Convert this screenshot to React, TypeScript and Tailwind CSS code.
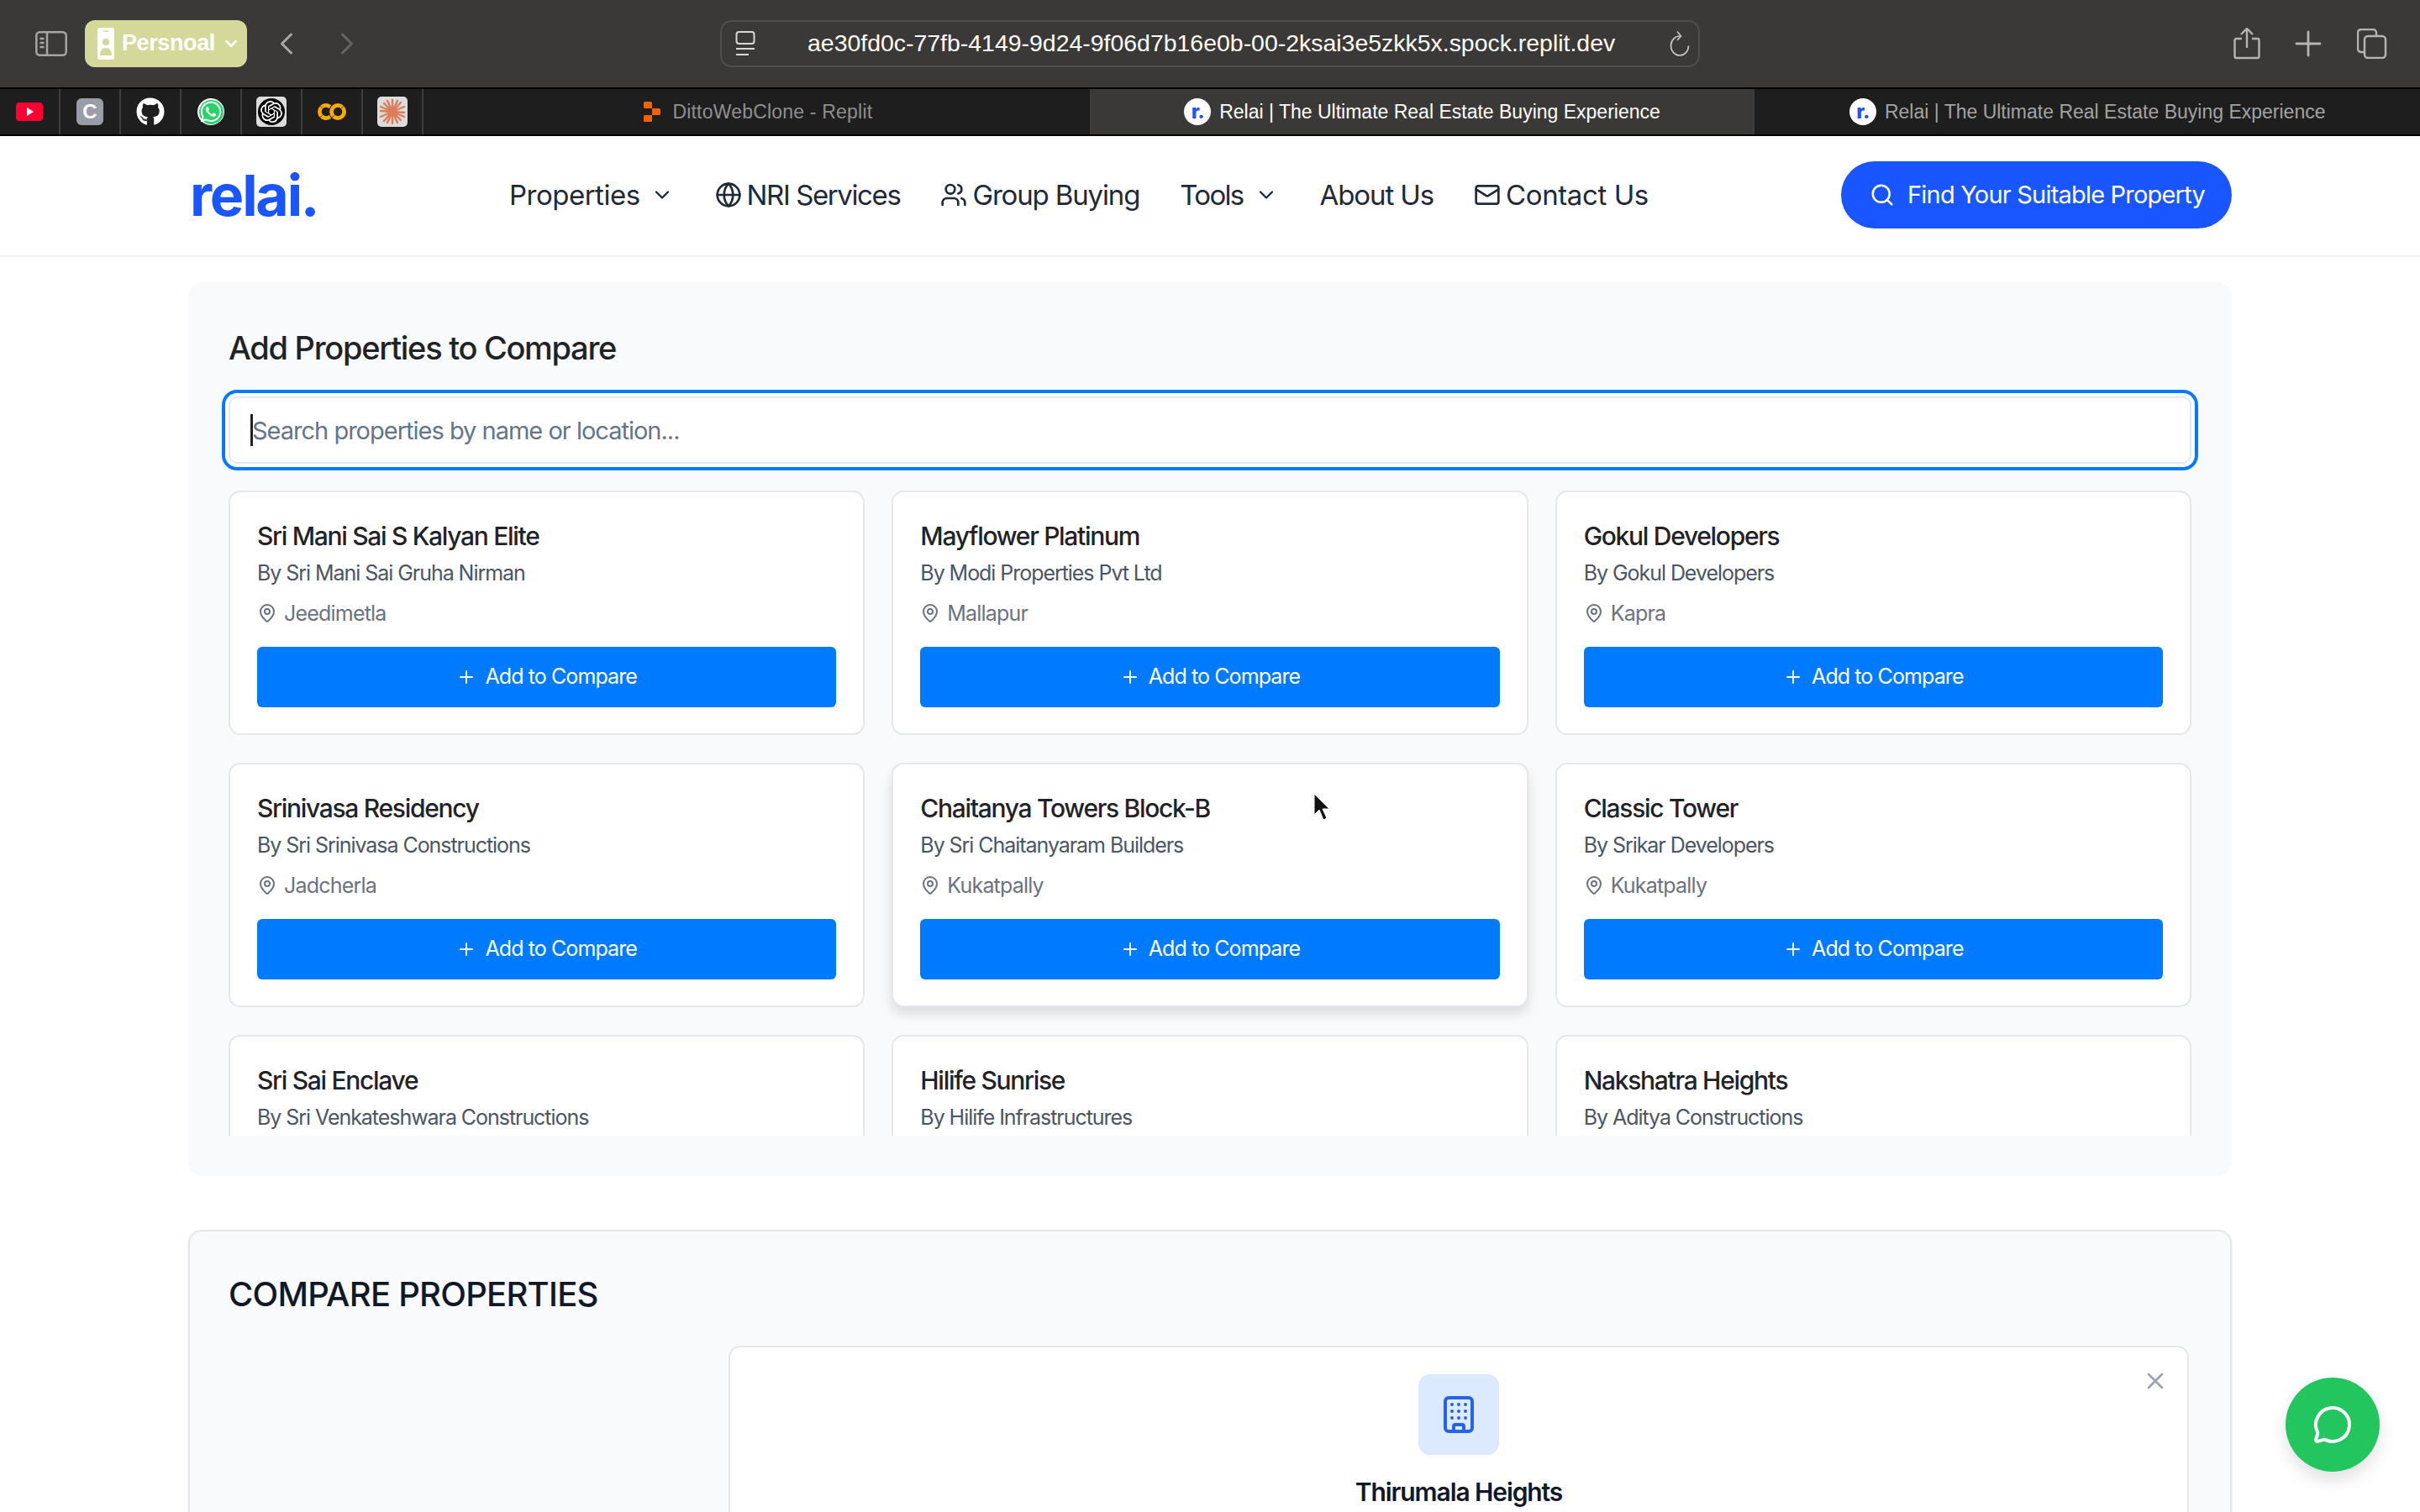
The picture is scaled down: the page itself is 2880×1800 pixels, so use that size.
import {
  Building,
  ChevronDown,
  ChevronLeft,
  ChevronRight,
  Globe,
  Mail,
  MapPin,
  MessageCircle,
  Plus,
  Search,
  Users,
  X,
} from "lucide-react";
import { FaGithub, FaWhatsapp } from "react-icons/fa";
import { SiGooglecolab, SiOpenai, SiReplit } from "react-icons/si";

// last row sits under the scroll fold, only name + builder are visible
const PROPERTIES = [
  { name: "Sri Mani Sai S Kalyan Elite", by: "By Sri Mani Sai Gruha Nirman", place: "Jeedimetla" },
  { name: "Mayflower Platinum", by: "By Modi Properties Pvt Ltd", place: "Mallapur" },
  { name: "Gokul Developers", by: "By Gokul Developers", place: "Kapra" },
  { name: "Srinivasa Residency", by: "By Sri Srinivasa Constructions", place: "Jadcherla" },
  { name: "Chaitanya Towers Block-B", by: "By Sri Chaitanyaram Builders", place: "Kukatpally", hover: true },
  { name: "Classic Tower", by: "By Srikar Developers", place: "Kukatpally" },
  { name: "Sri Sai Enclave", by: "By Sri Venkateshwara Constructions" },
  { name: "Hilife Sunrise", by: "By Hilife Infrastructures" },
  { name: "Nakshatra Heights", by: "By Aditya Constructions" },
];

function RelaiFavicon() {
  return (
    <span className="flex h-[32px] w-[32px] items-center justify-center rounded-full bg-white font-['Inter',sans-serif] text-[24px] leading-none font-extrabold tracking-[-1px] text-[#1a56ff]">
      r.
    </span>
  );
}

function Pinned({ children }: { children: React.ReactNode }) {
  return (
    <div className="flex h-full w-[72px] shrink-0 items-center justify-center border-r-2 border-[#3d3d3d]">
      {children}
    </div>
  );
}

function BrowserChrome() {
  return (
    <div className="shrink-0 font-['Liberation_Sans',sans-serif]">
      {/* Toolbar */}
      <div className="flex h-[104px] items-center bg-[#3a3937] pb-[1px]">
        <svg className="ml-[42px] h-[30px] w-[38px]" viewBox="0 0 38 30" fill="none" stroke="#a5a5a3" strokeWidth="2.5">
          <rect x="1.3" y="1.3" width="35.4" height="27.4" rx="4" />
          <path d="M14 1v28M5.5 9h5M5.5 14h5M5.5 19h5" />
        </svg>
        <div className="ml-[21px] flex h-[56px] w-[193px] items-center rounded-[12px] bg-[#d4d899] pl-[15px] text-white">
          <svg className="h-[38px] w-[20px]" viewBox="0 0 20 38" fill="#fff">
            <path d="M3 0h14a3 3 0 0 1 3 3v32a3 3 0 0 1-3 3H3a3 3 0 0 1-3-3V3a3 3 0 0 1 3-3Z" />
            <circle cx="10" cy="17" r="4" fill="#d4d899" />
            <path d="M3 33c0-6 3-9 7-9s7 3 7 9Z" fill="#d4d899" />
            <path d="M7 4h6" stroke="#d4d899" strokeWidth="1.5" />
          </svg>
          <span className="ml-[9px] text-[27px] leading-none font-bold tracking-[-0.4px]">Persnoal</span>
          <ChevronDown className="ml-[8px] h-[22px] w-[22px]" strokeWidth={3} />
        </div>
        <ChevronLeft className="ml-[25px] h-[44px] w-[44px] text-[#a8a8a6]" strokeWidth={1.6} />
        <ChevronRight className="ml-[28px] h-[44px] w-[44px] text-[#666563]" strokeWidth={1.6} />
        <div className="ml-[422px] flex h-[56px] w-[1166px] items-center rounded-[14px] border-2 border-[#4f4e4c] pr-[10px] pl-[16px] text-white">
          <svg className="h-[30px] w-[24px]" viewBox="0 0 24 30" fill="none" stroke="#d8d8d6" strokeWidth="2">
            <rect x="1.5" y="1" width="21" height="14" rx="3" />
            <path d="M1 21h22M1 28h15" />
          </svg>
          <span className="ml-[62px] text-[28.45px] leading-none font-normal whitespace-nowrap">
            ae30fd0c-77fb-4149-9d24-9f06d7b16e0b-00-2ksai3e5zkk5x.spock.replit.dev
          </span>
          <svg className="ml-auto h-[32px] w-[24px]" viewBox="0 0 24 32" fill="none" stroke="#c4c4c2" strokeWidth="1.7">
            <path d="M12 7a10.5 11.5 0 1 0 10.5 11.5" />
            <path d="M9 1.5l4.5 5.5L9 12" />
          </svg>
        </div>
        <div className="ml-auto flex items-center pr-[39px]">
          <svg className="h-[38px] w-[32px]" viewBox="0 0 32 38" fill="none" stroke="#b5b5b3" strokeWidth="2.4">
            <path d="M10 13H3.5a2 2 0 0 0-2 2v19a2 2 0 0 0 2 2h25a2 2 0 0 0 2-2V15a2 2 0 0 0-2-2H22M16 24V2M9 8l7-7 7 7" />
          </svg>
          <Plus className="ml-[33px] h-[48px] w-[48px] text-[#b5b5b3]" strokeWidth={1.4} />
          <svg className="ml-[34px] h-[36px] w-[36px]" viewBox="0 0 36 36" fill="none" stroke="#b5b5b3" strokeWidth="2.4">
            <rect x="9" y="9" width="25" height="26" rx="4" />
            <path d="M9 28H5a4 4 0 0 1-4-4V5a4 4 0 0 1 4-4h14a4 4 0 0 1 4 4v4" />
          </svg>
        </div>
      </div>
      {/* Tab bar */}
      <div className="flex h-[58px] border-y-2 border-black bg-[#1e1e1e]">
        <Pinned>
          <span className="flex h-[22px] w-[32px] items-center justify-center rounded-[4px] bg-[#ff0033]">
            <span className="ml-[2px] h-0 w-0 border-y-[5px] border-l-[8px] border-y-transparent border-l-white" />
          </span>
        </Pinned>
        <Pinned>
          <span className="flex h-[32px] w-[32px] items-center justify-center rounded-[6px] bg-[#9a9ca8] text-[24px] font-bold text-white">
            C
          </span>
        </Pinned>
        <Pinned>
          <FaGithub className="h-[34px] w-[34px] text-white" />
        </Pinned>
        <Pinned>
          <span className="flex h-[32px] w-[32px] items-center justify-center rounded-full bg-white">
            <span className="flex h-[29px] w-[29px] items-center justify-center rounded-full bg-[#25d366]">
              <FaWhatsapp className="h-[28px] w-[28px] text-white" />
            </span>
          </span>
        </Pinned>
        <Pinned>
          <span className="flex h-[36px] w-[36px] items-center justify-center rounded-[5px] bg-[#dcdcdc]">
            <span className="flex h-[32px] w-[32px] items-center justify-center rounded-full bg-black">
              <SiOpenai className="h-[26px] w-[26px] text-white" />
            </span>
          </span>
        </Pinned>
        <Pinned>
          <SiGooglecolab className="h-[34px] w-[34px] text-[#f9ab00]" />
        </Pinned>
        <Pinned>
          <span className="flex h-[36px] w-[36px] items-center justify-center rounded-[5px] bg-[#dcdcdc]">
            <svg className="h-[32px] w-[32px]" viewBox="0 0 32 32" stroke="#db7c5a" strokeWidth="2.4" strokeLinecap="round">
              <path d="M16 2v28M2 15l28 2M6 6l20 20M26 5L6 27M10 3l12 26M22 3l-12 26M2 10l28 12M30 10L2 22" />
            </svg>
          </span>
        </Pinned>
        <div className="flex h-full w-[793px] items-center justify-center gap-[12px] pl-[2px] text-[23px] tracking-[0.2px] text-[#8f8f8f]">
          <SiReplit className="h-[24px] w-[24px] text-[#f26207]" />
          <span>DittoWebClone - Replit</span>
        </div>
        <div className="flex h-full w-[792px] items-center justify-center gap-[10px] border-x-2 border-[#3d3d3d] bg-[#3a3937] text-[23px] text-white">
          <RelaiFavicon />
          <span>Relai | The Ultimate Real Estate Buying Experience</span>
        </div>
        <div className="flex h-full w-[792px] items-center justify-center gap-[10px] text-[23px] text-[#a3a3a3]">
          <RelaiFavicon />
          <span>Relai | The Ultimate Real Estate Buying Experience</span>
        </div>
      </div>
    </div>
  );
}

function SiteHeader() {
  return (
    <header className="flex h-[144px] shrink-0 items-center border-b-2 border-[#f1f2f4] bg-white pr-[224px] pb-[2px] pl-[226px] text-[#1f2937]">
      <span className="w-[154px] text-[68px] leading-none font-bold tracking-[-2.2px] text-[#1a56ff]">relai.</span>
      <nav className="ml-[226px] flex items-center text-[33px] leading-none font-normal">
        <span className="tracking-[-0.5px]">Properties</span>
        <ChevronDown className="ml-[12px] h-[28px] w-[28px]" strokeWidth={2} />
        <Globe className="ml-[49px] h-[32px] w-[32px]" strokeWidth={2} />
        <span className="ml-[6px] tracking-[-1.4px]">NRI Services</span>
        <Users className="ml-[48px] h-[32px] w-[32px]" strokeWidth={2} />
        <span className="ml-[6px] tracking-[-1.15px]">Group Buying</span>
        <span className="ml-[48px] tracking-[-1.7px]">Tools</span>
        <ChevronDown className="ml-[13px] h-[28px] w-[28px]" strokeWidth={2} />
        <span className="ml-[50px] tracking-[-1.1px]">About Us</span>
        <Mail className="ml-[48px] h-[32px] w-[32px]" strokeWidth={2} />
        <span className="ml-[6px] tracking-[-0.4px]">Contact Us</span>
      </nav>
      <button className="ml-auto flex h-[80px] w-[465px] items-center rounded-full bg-[#1a56ff] pl-[34px] text-[29px] font-normal tracking-[-0.8px] text-white">
        <Search className="h-[30px] w-[30px]" strokeWidth={2} />
        <span className="ml-[15px]">Find Your Suitable Property</span>
      </button>
    </header>
  );
}

function PropertyCard({ name, by, place, hover }: { name: string; by: string; place?: string; hover?: boolean }) {
  return (
    <div
      className={`h-[291px] rounded-[14px] border-2 border-[#e5e7eb] bg-white px-[32px] pt-[32px] ${
        hover ? "shadow-[0_8px_14px_rgba(0,0,0,0.12)]" : ""
      }`}
    >
      <h3 className="text-[30px] leading-[40px] font-medium tracking-[-1.3px] text-[#1f2328]">{name}</h3>
      <p className="mt-[6px] text-[25px] leading-[36px] tracking-[-1.05px] text-[#4b5563]">{by}</p>
      {place && (
        <>
          <p className="mt-[12px] flex items-center text-[25px] leading-[36px] tracking-[-0.8px] text-[#6b7280]">
            <MapPin className="mr-[8px] h-[24px] w-[24px]" strokeWidth={2} />
            {place}
          </p>
          <button className="mt-[22px] flex h-[72px] w-full items-center justify-center rounded-[6px] bg-[#007bff] text-[25px] font-normal tracking-[-0.9px] text-white">
            <Plus className="mr-[10px] h-[24px] w-[24px]" strokeWidth={2} />
            Add to Compare
          </button>
        </>
      )}
    </div>
  );
}

export default function App() {
  return (
    <div className="relative flex h-[1800px] w-[2880px] flex-col overflow-hidden bg-white font-['Inter',sans-serif]">
      <BrowserChrome />
      <SiteHeader />
      <main className="flex-1 px-[224px] pt-[30px]">
        <section className="h-[1064px] rounded-[16px] bg-[#f9fafb] px-[48px] pt-[56px]">
          <h2 className="text-[38px] leading-[44px] font-medium tracking-[-1.3px] text-[#1f2328]">
            Add Properties to Compare
          </h2>
          <div className="relative mt-[36px] w-[2336px]">
            <input
              className="h-[80px] w-full rounded-[10px] border-2 border-[#e2e8f0] bg-white px-[26px] text-[29px] tracking-[-1px] outline-none ring-[4px] ring-offset-[4px] ring-[#007bff] ring-offset-white placeholder:text-[#64748b]"
              placeholder="Search properties by name or location..."
              readOnly
            />
            <span className="absolute top-[21px] left-[26px] h-[38px] w-[3px] bg-[#1f2328]" />
          </div>
          <div className="mt-[32px] h-[768px] w-[2336px] overflow-hidden">
            <div className="grid grid-cols-3 gap-x-[32px] gap-y-[33px]">
              {PROPERTIES.map((p) => (
                <PropertyCard key={p.name} {...p} />
              ))}
            </div>
          </div>
        </section>
        <section className="mt-[64px] h-[600px] rounded-[16px] border-2 border-[#e5e7eb] bg-[#f9fafb] pt-[50px] pl-[46px] shadow-sm">
          <h2 className="text-[40px] leading-[50px] font-medium tracking-[-0.75px] text-[#111827]">COMPARE PROPERTIES</h2>
          <div className="relative mt-[36px] ml-[595px] h-[400px] w-[1738px] rounded-[14px] border-2 border-[#e5e7eb] bg-white pt-[32px]">
            <X className="absolute top-[24px] right-[22px] h-[32px] w-[32px] text-[#9ca3af]" strokeWidth={2} />
            <div className="flex flex-col items-center">
              <div className="flex h-[96px] w-[96px] items-center justify-center rounded-[14px] bg-[#dbeafe]">
                <Building className="h-[48px] w-[48px] text-[#2563eb]" strokeWidth={2} />
              </div>
              <p className="mt-[24px] text-[30px] leading-[40px] font-semibold tracking-[-1.1px] text-[#111827]">
                Thirumala Heights
              </p>
            </div>
          </div>
        </section>
      </main>
      {/* Floating chat button */}
      <button className="absolute top-[1640px] left-[2720px] flex h-[112px] w-[112px] items-center justify-center rounded-full bg-[#22c55e] shadow-[0_10px_20px_rgba(0,0,0,0.12)]">
        <MessageCircle className="h-[48px] w-[48px] text-white" strokeWidth={2} />
      </button>
      {/* Mouse cursor */}
      <svg className="absolute top-[944px] left-[1562px] h-[34px] w-[22px]" viewBox="0 0 22 34" fill="#111" stroke="#fff" strokeWidth="1">
        <path d="M2 1v25l6-6 5 12 4-2-5-11h8Z" />
      </svg>
    </div>
  );
}
